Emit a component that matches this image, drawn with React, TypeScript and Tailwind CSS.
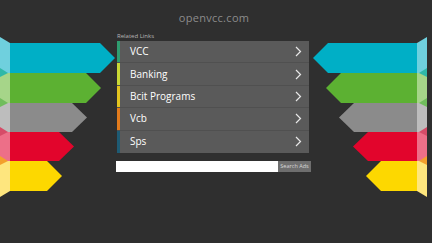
import React from 'react';

interface Band {
  top: number;
  bottom: number;
  color: string;
  light: string;
  fold: string;
}

const bands: Band[] = [
  { top: 43, bottom: 73, color: '#00afc6', light: '#6fd0de', fold: '#2fb8a8' },
  { top: 73, bottom: 103, color: '#5cb132', light: '#a6d589', fold: '#70bd5c' },
  { top: 103, bottom: 132, color: '#8b8b8b', light: '#bdbdbd', fold: '#d64c68' },
  { top: 132, bottom: 161, color: '#e2052c', light: '#ed6f88', fold: '#f3a02c' },
  { top: 161, bottom: 191, color: '#fdd800', light: '#fee67e', fold: '#fee67e' },
];

// x where each arrow tip sits, counted from the panel edge outwards
const leftTips = [115, 101, 87, 74, 62];
const rightTips = [313, 326, 339, 353, 366];

const links = [
  { label: 'VCC', bar: '#2f9d70' },
  { label: 'Banking', bar: '#c9d834' },
  { label: 'Bcit Programs', bar: '#e3c41f' },
  { label: 'Vcb', bar: '#e27b1c' },
  { label: 'Sps', bar: '#1e5b74' },
];

function LeftArrows() {
  return (
    <svg width="116" height="243" viewBox="0 0 116 243" className="shrink-0">
      {bands.map((b, i) => {
        const mid = (b.top + b.bottom) / 2;
        const tip = leftTips[i];
        return (
          <polygon
            key={i}
            points={`0,${b.top} ${tip - 15},${b.top} ${tip},${mid} ${tip - 15},${b.bottom} 0,${b.bottom}`}
            fill={b.color}
          />
        );
      })}
      {bands.map((b, i) => {
        const t = i === 0 ? b.top - 6 : b.top;
        const bt = i === bands.length - 1 ? b.bottom + 6 : b.bottom;
        return (
          <polygon
            key={'l' + i}
            points={`0,${t} 10,${b.top} 10,${b.bottom} 0,${bt}`}
            fill={b.light}
          />
        );
      })}
      {bands.slice(0, 4).map((b, i) => (
        <polygon
          key={'f' + i}
          points={`0,${b.bottom - 5} 8,${b.bottom} 0,${b.bottom + 4}`}
          fill={b.fold}
        />
      ))}
    </svg>
  );
}

function RightArrows() {
  return (
    <svg width="120" height="243" viewBox="312 0 120 243" className="shrink-0">
      {bands.map((b, i) => {
        const mid = (b.top + b.bottom) / 2;
        const tip = rightTips[i];
        return (
          <polygon
            key={i}
            points={`417,${b.top} ${tip + 15},${b.top} ${tip},${mid} ${tip + 15},${b.bottom} 417,${b.bottom}`}
            fill={b.color}
          />
        );
      })}
      {bands.map((b, i) => {
        const t = i === 0 ? b.top - 6 : b.top;
        const bt = i === bands.length - 1 ? b.bottom + 6 : b.bottom;
        return (
          <polygon
            key={'l' + i}
            points={`417,${b.top} 427,${t} 427,${bt} 417,${b.bottom}`}
            fill={b.light}
          />
        );
      })}
      {bands.slice(0, 4).map((b, i) => (
        <polygon
          key={'f' + i}
          points={`427,${b.bottom - 5} 419,${b.bottom} 427,${b.bottom + 4}`}
          fill={b.fold}
        />
      ))}
    </svg>
  );
}

function Chevron() {
  return (
    <svg width="7" height="11" viewBox="0 0 7 11" fill="none">
      <path d="M1 1 L5.5 5.5 L1 10" stroke="#e8e8e8" strokeWidth="1.2" />
    </svg>
  );
}

export default function App() {
  return (
    <div
      className="flex w-[432px] h-[243px] overflow-hidden bg-[#2f2f2f]"
      style={{ fontFamily: '"Open Sans", "Liberation Sans", sans-serif' }}
    >
      <LeftArrows />

      <div className="flex flex-col w-[196px] shrink-0">
        <div className="mt-[11px] h-[14px] text-center text-[11px] leading-[14px] tracking-[0.3px] text-[#8c8c8c]">
          openvcc.com
        </div>

        <div className="mt-[7px] ml-[1px] h-[8px] text-[6px] leading-[8px] text-[#b5b5b5]">
          Related Links
        </div>

        <div className="mt-[1px] ml-[1px] w-[192px] bg-[#5a5a5a]">
          {links.map((l, i) => (
            <div
              key={l.label}
              className={`flex h-[22.4px] items-stretch ${
                i < links.length - 1 ? 'border-b border-[#505050]' : ''
              }`}
            >
              <div className="w-[3px]" style={{ backgroundColor: l.bar }} />
              <div className="flex flex-1 items-center justify-between pl-[10px] pr-[7px]">
                <span className="text-[10px] text-white">{l.label}</span>
                <Chevron />
              </div>
            </div>
          ))}
        </div>

        <div className="mt-[8px] flex h-[11px] w-[195px]">
          <div className="flex-1 bg-white" />
          <div className="flex w-[33px] items-center justify-center bg-[#6e6e6e] text-[5.5px] text-[#d8d8d8]">
            Search Ads
          </div>
        </div>
      </div>

      <RightArrows />
    </div>
  );
}
